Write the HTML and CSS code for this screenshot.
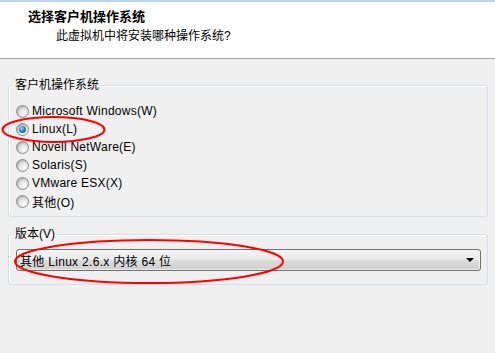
FILE: index.html
```html
<!DOCTYPE html>
<html lang="zh-CN">

<head>
    <meta charset="UTF-8">
    <meta name="viewport" content="width=device-width, initial-scale=1.0">

    <link rel="stylesheet" href="styles.css">
</head>

<body>
    <div class="header">
        <p class="title">选择客户机操作系统</p>
        <p class="subtitle">此虚拟机中将安装哪种操作系统?</p>
    </div>

    <div class="content">
        <fieldset class="group os-group">
            <legend>客户机操作系统</legend>
            <label class="option"><input type="radio" name="os"><span>Microsoft Windows(W)</span></label>
            <label class="option"><input type="radio" name="os" checked><span>Linux(L)</span></label>
            <label class="option"><input type="radio" name="os"><span>Novell NetWare(E)</span></label>
            <label class="option"><input type="radio" name="os"><span>Solaris(S)</span></label>
            <label class="option"><input type="radio" name="os"><span>VMware ESX(X)</span></label>
            <label class="option"><input type="radio" name="os"><span>其他(O)</span></label>
        </fieldset>

        <fieldset class="group version-group">
            <legend>版本(V)</legend>
            <div class="combo">
                <span class="combo-text">其他 Linux 2.6.x 内核 64 位</span>
                <span class="combo-arrow"></span>
            </div>
        </fieldset>
    </div>

    <!-- red annotation marks drawn over the dialog -->
    <svg class="marks" width="495" height="353" viewBox="0 0 495 353">
        <ellipse cx="53.5" cy="129.5" rx="51" ry="12.5" />
        <ellipse cx="149" cy="261.5" rx="134" ry="21.5" />
    </svg>
</body>

</html>
```

FILE: styles.css
```css
body {
    margin: 0;
    width: 495px;
    height: 353px;
    overflow: hidden;
    position: relative;

    background-color: #f0f0f0;
    color: #000;
    font-family: 'Liberation Sans', 'Noto Sans CJK SC', sans-serif;
    font-size: 12px;
}

.header {
    box-sizing: border-box;
    height: 59px;
    padding: 7px 0 0 28px;

    background-color: #fff;
    border-top: 2px solid #bcd3ec;
    border-bottom: 1px solid #a0a0a0;

    p {
        margin: 0;
        line-height: 16px;
    }

    .title {
        font-size: 13px;
        font-weight: bold;
    }

    .subtitle {
        margin-top: 3px;
        padding-left: 28px;
    }
}

.content {
    padding: 19px 7px 0 8px;
}

.group {
    margin: 0;
    border: 1px solid #d5dfe5;
    border-radius: 3px;
    box-shadow: inset 1px 1px 0 #fff;

    legend {
        padding: 0 2px;
        margin-left: -3px;
        line-height: 14px;
    }
}

.os-group {
    padding: 10px 7px 6px 7px;
    display: flex;
    flex-direction: column;
}

.option {
    height: 18px;
    display: flex;
    align-items: center;
    gap: 3px;
    letter-spacing: .25px;

    input {
        appearance: none;
        margin: 0;
        width: 13px;
        height: 13px;
        box-sizing: border-box;
        border-radius: 50%;
        border: 1px solid #8a8a8a;
        background: radial-gradient(circle at 65% 70%, #ffffff 0%, #e4e4e4 40%, #bdbdbd 100%);
        box-shadow: inset 1px 1px 1px rgba(0, 0, 0, .15);
        display: flex;
        align-items: center;
        justify-content: center;

        &:checked::after {
            content: '';
            width: 7px;
            height: 7px;
            border-radius: 50%;
            background: radial-gradient(circle at 40% 35%, #b8e2ff 0%, #2a8bd3 40%, #0b3f73 100%);
        }
    }
}

.version-group {
    margin-top: 10px;
    padding: 8px 6px 13px 7px;
}

.combo {
    box-sizing: border-box;
    height: 22px;
    padding: 0 6px 0 3px;

    display: flex;
    align-items: center;
    justify-content: space-between;

    border: 1px solid #707070;
    border-radius: 3px;
    background: linear-gradient(#f2f2f2 0%, #ebebeb 50%, #dddddd 51%, #cfcfcf 100%);
    box-shadow: inset 0 0 0 1px rgba(255, 255, 255, .6);

    .combo-text {
        letter-spacing: .3px;
    }

    .combo-arrow {
        width: 0;
        height: 0;
        border-left: 4px solid transparent;
        border-right: 4px solid transparent;
        border-top: 4px solid #000;
    }
}

.marks {
    position: absolute;
    top: 0;
    left: 0;
    pointer-events: none;

    ellipse {
        fill: none;
        stroke: #ff0000;
        stroke-width: 2;
    }
}
```
